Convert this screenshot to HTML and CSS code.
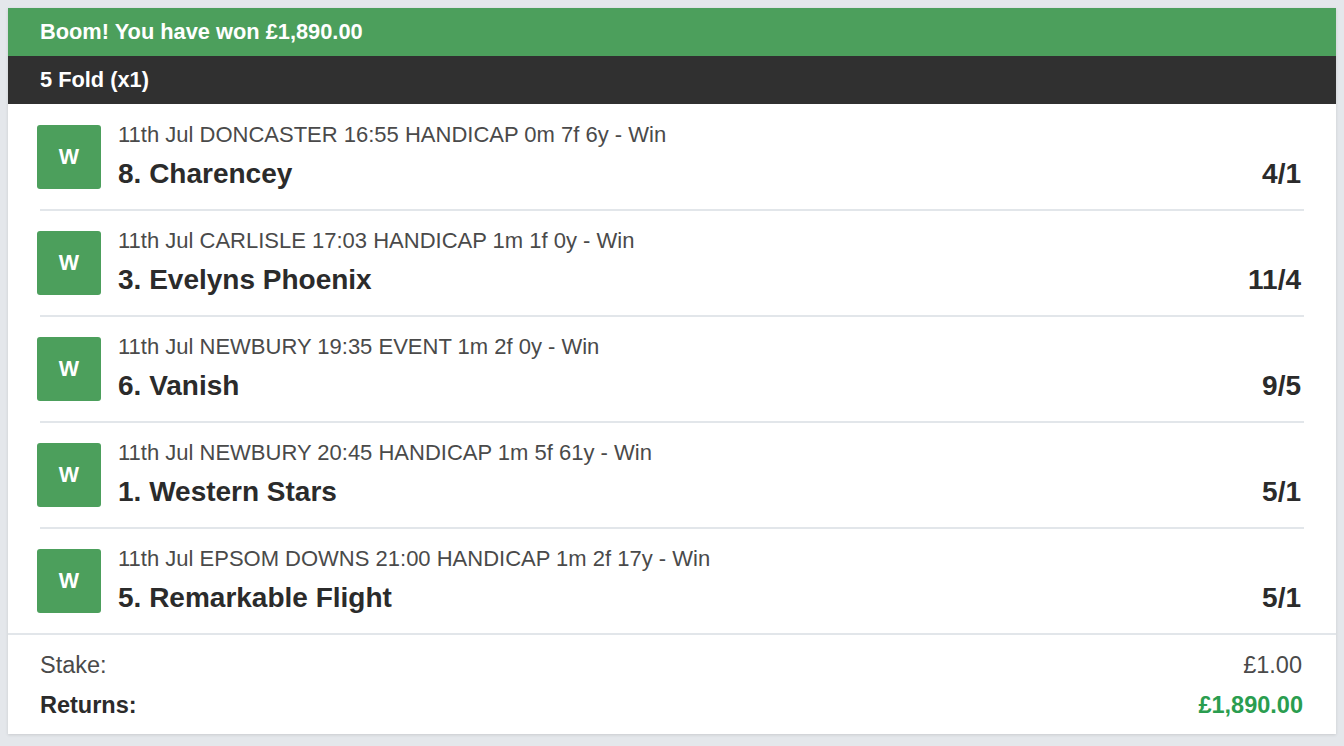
FILE: index.html
```html
<!DOCTYPE html>
<html lang="en">
<head>
<meta charset="utf-8">
<title>Bet receipt</title>
<link rel="stylesheet" href="styles.css">
</head>
<body>
<div class="card">
  <div class="win-banner">Boom! You have won £1,890.00</div>
  <div class="bet-type">5 Fold (x1)</div>
  <ul class="legs">
    <li class="leg">
      <div class="badge">W</div>
      <div class="leg-info">
        <div class="meta">11th Jul DONCASTER 16:55 HANDICAP 0m 7f 6y - Win</div>
        <div class="name">8. Charencey</div>
      </div>
      <div class="odds">4/1</div>
    </li>
    <li class="leg">
      <div class="badge">W</div>
      <div class="leg-info">
        <div class="meta">11th Jul CARLISLE 17:03 HANDICAP 1m 1f 0y - Win</div>
        <div class="name">3. Evelyns Phoenix</div>
      </div>
      <div class="odds">11/4</div>
    </li>
    <li class="leg">
      <div class="badge">W</div>
      <div class="leg-info">
        <div class="meta">11th Jul NEWBURY 19:35 EVENT 1m 2f 0y - Win</div>
        <div class="name">6. Vanish</div>
      </div>
      <div class="odds">9/5</div>
    </li>
    <li class="leg">
      <div class="badge">W</div>
      <div class="leg-info">
        <div class="meta">11th Jul NEWBURY 20:45 HANDICAP 1m 5f 61y - Win</div>
        <div class="name">1. Western Stars</div>
      </div>
      <div class="odds">5/1</div>
    </li>
    <li class="leg">
      <div class="badge">W</div>
      <div class="leg-info">
        <div class="meta">11th Jul EPSOM DOWNS 21:00 HANDICAP 1m 2f 17y - Win</div>
        <div class="name">5. Remarkable Flight</div>
      </div>
      <div class="odds">5/1</div>
    </li>
  </ul>
  <div class="summary">
    <div class="summary-row">
      <span class="label">Stake:</span>
      <span class="value">£1.00</span>
    </div>
    <div class="summary-row returns">
      <span class="label">Returns:</span>
      <span class="value">£1,890.00</span>
    </div>
  </div>
</div>
</body>
</html>
```
FILE: styles.css
```css
html, body {
  margin: 0;
  padding: 0;
}
body {
  background: #e4e7eb;
  padding: 8px;
  font-family: "Liberation Sans", Arial, Helvetica, sans-serif;
  color: #333;
}
.card {
  background: #fff;
  box-shadow: 0 1px 3px rgba(0, 0, 0, 0.12);
}
.win-banner {
  background: #4c9f5c;
  color: #fff;
  font-weight: bold;
  font-size: 21.8px;
  height: 48px;
  line-height: 48px;
  padding: 0 32px;
}
.bet-type {
  background: #303030;
  color: #fff;
  font-weight: bold;
  font-size: 21.8px;
  height: 48px;
  line-height: 48px;
  padding: 0 32px;
}
.legs {
  list-style: none;
  margin: 0;
  padding: 1px 0 0;
  border-bottom: 2px solid #e2e6ea;
}
.leg {
  display: flex;
  align-items: flex-end;
  margin: 0 32px;
  padding: 20px 0;
  border-bottom: 2px solid #e2e6ea;
}
.leg:last-child {
  border-bottom: none;
}
.badge {
  flex: 0 0 64px;
  width: 64px;
  height: 64px;
  margin-left: -3px;
  background: #4c9f5c;
  border-radius: 3px;
  color: #fff;
  font-weight: bold;
  font-size: 21.5px;
  display: flex;
  align-items: center;
  justify-content: center;
}
.leg-info {
  flex: 1;
  margin-left: 17px;
  display: flex;
  flex-direction: column;
  align-self: stretch;
}
.meta {
  font-size: 22px;
  line-height: 20px;
  color: #4a4a4a;
}
.name {
  font-size: 28px;
  font-weight: bold;
  line-height: 28px;
  margin-top: 15px;
  color: #2b2b2b;
}
.odds {
  font-size: 28px;
  font-weight: bold;
  line-height: 28px;
  margin-bottom: 1px;
  padding-right: 3px;
  color: #2b2b2b;
}
.summary {
  padding: 10px 32px 9px;
}
.summary-row {
  display: flex;
  justify-content: space-between;
  font-size: 23.5px;
  line-height: 40px;
  color: #4a4a4a;
}
.summary-row .value {
  padding-right: 2px;
}
.summary-row.returns {
  font-weight: bold;
  color: #2b2b2b;
}
.summary-row.returns .value {
  padding-right: 1px;
  color: #2a9d4f;
}
```
